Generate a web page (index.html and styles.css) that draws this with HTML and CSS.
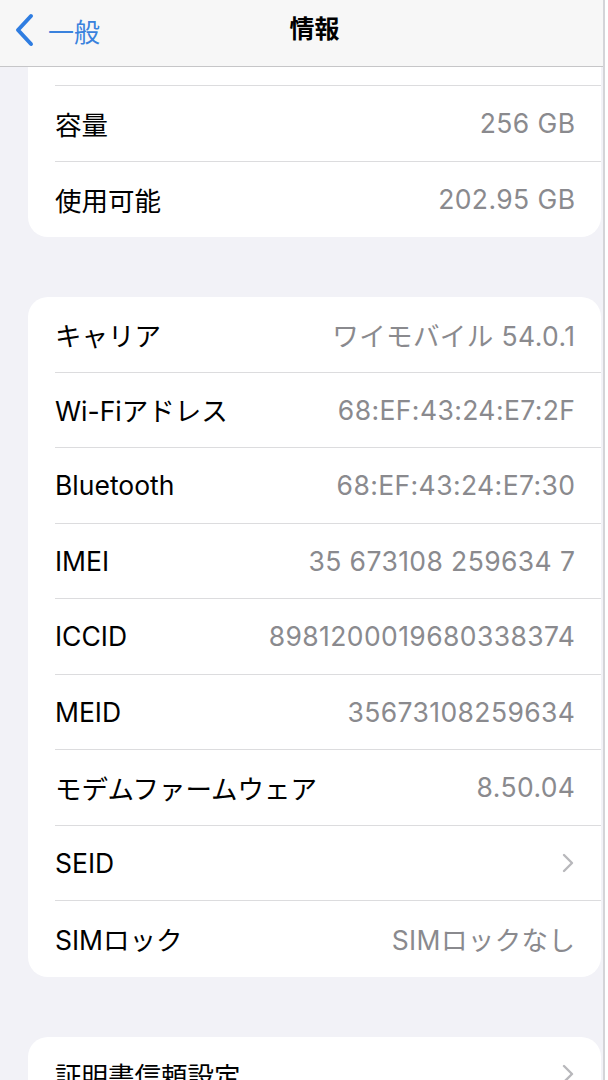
FILE: index.html
```html
<!DOCTYPE html>
<html lang="ja">
<head>
  <meta charset="UTF-8" />
  <meta name="viewport" content="width=device-width, initial-scale=1.0"/>
  <title>情報</title>
  <link rel="stylesheet" href="styles.css">
</head>
<body>
  <div class="screen">
    <header class="navbar">
      <a class="back" href="#">
        <svg class="back-icon" width="20" height="34" viewBox="0 0 20 34">
          <path d="M17 3 L4 17 L17 31" fill="none" stroke="#2f7de1" stroke-width="4" stroke-linecap="round" stroke-linejoin="round"/>
        </svg>
        <span>一般</span>
      </a>
      <h1>情報</h1>
    </header>

    <main class="content">
      <section class="card card-cut">
        <div class="row row-partial"></div>
        <div class="row"><span class="label">容量</span><span class="value">256 GB</span></div>
        <div class="row"><span class="label">使用可能</span><span class="value">202.95 GB</span></div>
      </section>

      <section class="card">
        <div class="row"><span class="label">キャリア</span><span class="value">ワイモバイル 54.0.1</span></div>
        <div class="row"><span class="label">Wi-Fiアドレス</span><span class="value">68:EF:43:24:E7:2F</span></div>
        <div class="row"><span class="label">Bluetooth</span><span class="value">68:EF:43:24:E7:30</span></div>
        <div class="row"><span class="label">IMEI</span><span class="value">35 673108 259634 7</span></div>
        <div class="row"><span class="label">ICCID</span><span class="value">8981200019680338374</span></div>
        <div class="row"><span class="label">MEID</span><span class="value">35673108259634</span></div>
        <div class="row"><span class="label">モデムファームウェア</span><span class="value">8.50.04</span></div>
        <div class="row"><span class="label">SEID</span><span class="chevron"><svg width="12" height="20" viewBox="0 0 12 20"><path d="M2 2 L10 10 L2 18" fill="none" stroke="#b8b8bc" stroke-width="2.4" stroke-linecap="round" stroke-linejoin="round"/></svg></span></div>
        <div class="row"><span class="label">SIMロック</span><span class="value">SIMロックなし</span></div>
      </section>

      <section class="card">
        <div class="row"><span class="label">証明書信頼設定</span><span class="chevron"><svg width="12" height="20" viewBox="0 0 12 20"><path d="M2 2 L10 10 L2 18" fill="none" stroke="#b8b8bc" stroke-width="2.4" stroke-linecap="round" stroke-linejoin="round"/></svg></span></div>
      </section>
    </main>
  </div>
</body>
</html>
```

FILE: styles.css
```css
body {
  margin: 0;
  background: #ffffff;
  font-family: "Inter", "Noto Sans CJK JP", sans-serif;
  color: #000;
  overflow: hidden;
}

.screen {
  width: 603px;
  height: 1080px;
  background: #f2f2f7;
  border-right: 2px solid #d4d4d8;
  overflow: hidden;
}

.navbar {
  position: relative;
  height: 66px;
  background: #f7f7f7;
  border-bottom: 1px solid #c6c6c8;
  display: flex;
  align-items: center;
}

.back {
  display: flex;
  align-items: center;
  gap: 14px;
  padding-left: 14px;
  color: #3a82dd;
  text-decoration: none;
  font-size: 26px;
  margin-top: -6px;
}

.back-icon {
  display: block;
}

.navbar h1 {
  position: absolute;
  left: 0;
  right: 0;
  top: 0;
  margin: 0;
  line-height: 58px;
  text-align: center;
  font-size: 25px;
  font-weight: 700;
  padding-left: 26px;
  pointer-events: none;
}

.content {
  padding: 0 2px 0 28px;
  display: flex;
  flex-direction: column;
  gap: 60px;
}

.card {
  background: #ffffff;
  border-radius: 20px;
  padding-left: 27px;
}

.card-cut {
  border-top-left-radius: 0;
  border-top-right-radius: 0;
}

.row {
  box-sizing: border-box;
  height: 75.5px;
  display: flex;
  align-items: center;
  justify-content: space-between;
  padding-right: 26px;
  border-bottom: 1px solid #dcdcde;
  font-size: 26.5px;
}

.row:last-child {
  border-bottom: none;
}

.row-partial {
  height: 19px;
}

.label {
  color: #000;
}

.value {
  color: #8a8a8e;
  letter-spacing: 0.4px;
  margin-right: -0.4px;
}

.chevron {
  display: flex;
  padding-right: 1px;
}
```
